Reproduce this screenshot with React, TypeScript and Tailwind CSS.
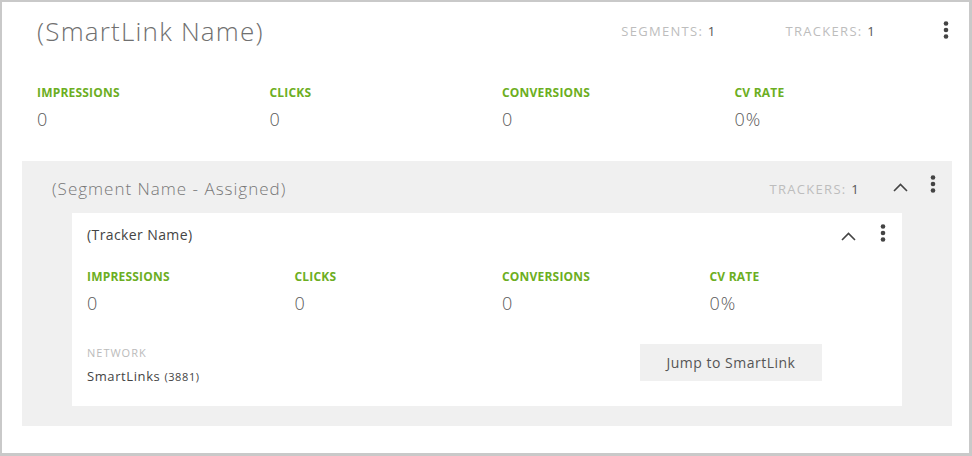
import React from "react";

const font = { fontFamily: '"Open Sans", "Liberation Sans", sans-serif' };

function Kebab() {
  return (
    <svg width="6" height="18" viewBox="0 0 6 18" className="block">
      <circle cx="3" cy="2.5" r="2.3" fill="#444" />
      <circle cx="3" cy="9" r="2.3" fill="#444" />
      <circle cx="3" cy="15.5" r="2.3" fill="#444" />
    </svg>
  );
}

function Chevron() {
  return (
    <svg width="15" height="9" viewBox="0 0 15 9" className="block">
      <path d="M1 8 L7.5 1.5 L14 8" fill="none" stroke="#444" strokeWidth="1.6" />
    </svg>
  );
}

function Metric({ label, value }: { label: string; value: string }) {
  return (
    <div className="flex flex-col">
      <div className="text-[12px] font-bold leading-[16px] text-[#6cae22] tracking-[0.2px]">{label}</div>
      <div className="mt-[8px] text-[18px] font-light leading-[20px] text-[#5a5a5a] tracking-[1px]">{value}</div>
    </div>
  );
}

export default function App() {
  return (
    <div style={font} className="w-[972px] h-[456px] bg-white border-t-2 border-l-2 border-b-[3px] border-r-[3px] border-[#c9c9c9] overflow-hidden">
      <div className="flex items-start pl-[35px] pr-[20px] pt-[15px]">
        <div className="text-[26px] font-light leading-[28px] text-[#707070] tracking-[1.2px]">(SmartLink Name)</div>
        <div className="ml-auto flex items-center mt-[6px] text-[13px] leading-[16px] text-[#bdbdbd] tracking-[1.3px]">
          <span>SEGMENTS: <span className="text-[#555]">1</span></span>
          <span className="ml-[69px]">TRACKERS: <span className="text-[#555]">1</span></span>
          <span className="ml-[67px] mt-[-2px]"><Kebab /></span>
        </div>
      </div>
      <div className="grid grid-cols-[repeat(4,232.5px)] pl-[35px] mt-[40px]">
        <Metric label="IMPRESSIONS" value="0" />
        <Metric label="CLICKS" value="0" />
        <Metric label="CONVERSIONS" value="0" />
        <Metric label="CV RATE" value="0%" />
      </div>
      <div className="ml-[20px] mt-[32px] w-[930px] h-[265px] bg-[#f0f0f0] flex flex-col">
        <div className="flex items-center pl-[30px] pr-[16px] pt-[10px] h-[46px]">
          <div className="text-[17px] font-light text-[#777] leading-[22px] tracking-[1px]">(Segment Name - Assigned)</div>
          <div className="ml-auto flex items-center">
            <span className="text-[13px] text-[#bdbdbd] leading-[16px] tracking-[1.3px]">TRACKERS: <span className="text-[#555]">1</span></span>
            <span className="ml-[33px] mt-[-4px]"><Chevron /></span>
            <span className="ml-[22px] mt-[-10px]"><Kebab /></span>
          </div>
        </div>
        <div className="ml-[50px] mt-[6px] w-[830px] h-[193px] bg-white flex flex-col">
          <div className="flex items-center pl-[15px] pr-[16px] pt-[12px] h-[32px]">
            <div className="text-[14px] text-[#444] leading-[18px] tracking-[0.4px]">(Tracker Name)</div>
            <div className="ml-auto flex items-center">
              <span className="mt-[2px]"><Chevron /></span>
              <span className="ml-[24px] mt-[-4px]"><Kebab /></span>
            </div>
          </div>
          <div className="grid grid-cols-[repeat(4,207.5px)] pl-[15px] mt-[24px]">
            <Metric label="IMPRESSIONS" value="0" />
            <Metric label="CLICKS" value="0" />
            <Metric label="CONVERSIONS" value="0" />
            <Metric label="CV RATE" value="0%" />
          </div>
          <div className="flex items-start pl-[15px] mt-[31px]">
            <div className="w-[553px] flex flex-col pt-[2px]">
              <div className="text-[11px] text-[#bbb] leading-[14px] tracking-[1px]">NETWORK</div>
              <div className="mt-[8px] text-[13px] text-[#444] leading-[16px] tracking-[0.6px]">
                SmartLinks <span className="text-[11px]">(3881)</span>
              </div>
            </div>
            <div className="w-[182px] h-[37px] bg-[#f0f0f0] flex items-center justify-center text-[14px] text-[#555] tracking-[0.5px]">
              Jump to SmartLink
            </div>
          </div>
        </div>
      </div>
    </div>
  );
}
